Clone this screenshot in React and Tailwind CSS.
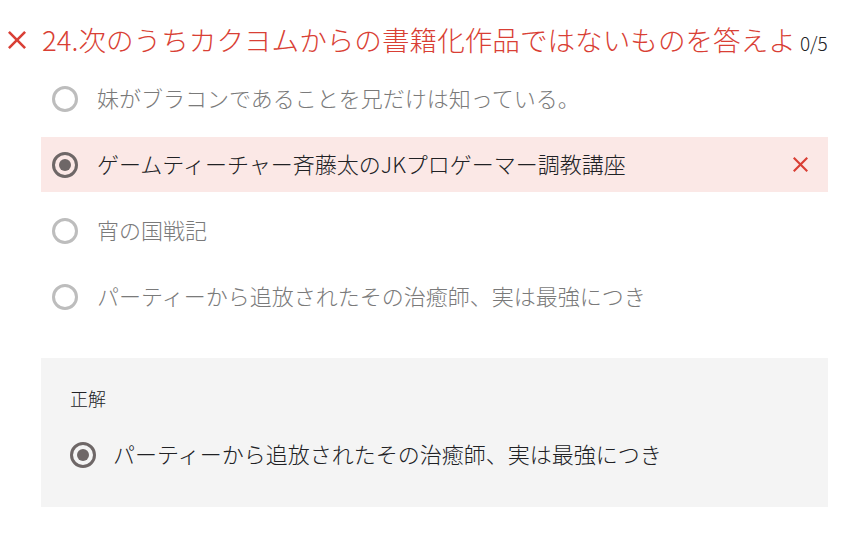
const CloseIcon = ({ className }) => (
  <svg className={className} viewBox="5 5 14 14" fill="currentColor">
    <path d="M19 6.41L17.59 5 12 10.59 6.41 5 5 6.41 10.59 12 5 17.59 6.41 19 12 13.41 17.59 19 19 17.59 13.41 12z" />
  </svg>
);

const Radio = ({ checked }) =>
  checked ? (
    <div className="w-[26px] h-[26px] shrink-0 rounded-full border-[3px] border-[#6e6767] flex items-center justify-center">
      <div className="w-[12px] h-[12px] rounded-full bg-[#6e6767]" />
    </div>
  ) : (
    <div className="w-[26px] h-[26px] shrink-0 rounded-full border-[3px] border-[#bdbdbd]" />
  );

const options = [
  { text: "妹がブラコンであることを兄だけは知っている。" },
  { text: "ゲームティーチャー斉藤太のJKプロゲーマー調教講座", chosen: true },
  { text: "宵の国戦記" },
  { text: "パーティーから追放されたその治癒師、実は最強につき" },
];

export default function App() {
  return (
    <div className="w-[849px] h-[533px] bg-white overflow-hidden font-['Noto_Sans_CJK_JP',sans-serif] font-light">
      {/* question title */}
      <div className="flex items-center h-[52px] mt-[14px] pl-[8px]">
        <CloseIcon className="w-[18px] h-[18px] text-[#d93f35] shrink-0" />
        <div className="flex items-baseline ml-[16px] pb-[2px]">
          <span className="text-[27.6px] leading-[40px] text-[#d93f35] whitespace-nowrap">
            24.次のうちカクヨムからの書籍化作品ではないものを答えよ
          </span>
          <span className="text-[19px] text-[#202124] ml-[4px]">0/5</span>
        </div>
      </div>

      {/* choices */}
      <div className="flex flex-col gap-[11px] pt-[5px] mx-[41px] w-[787px]">
        {options.map((o) => (
          <div
            key={o.text}
            className={`flex items-center h-[55px] pl-[11px] pr-[20px] ${o.chosen ? "bg-[#fbe8e6]" : ""}`}
          >
            <Radio checked={o.chosen} />
            <span
              className={`ml-[19px] pb-[4px] text-[22px] leading-[30px] whitespace-nowrap ${o.chosen ? "text-[#202124]" : "text-[#7a7a7a]"}`}
            >
              {o.text}
            </span>
            {o.chosen && <CloseIcon className="ml-auto w-[15px] h-[15px] text-[#d93f35]" />}
          </div>
        ))}
      </div>

      {/* correct answer */}
      <div className="mt-[34px] mx-[41px] w-[787px] h-[149px] bg-[#f4f4f4] pl-[29px] pt-[28px]">
        <div className="text-[18px] leading-[24px] text-[#202124] pb-[2px]">正解</div>
        <div className="flex items-center mt-[26px]">
          <Radio checked />
          <span className="ml-[17px] pb-[4px] text-[22px] leading-[30px] text-[#202124] whitespace-nowrap">
            パーティーから追放されたその治癒師、実は最強につき
          </span>
        </div>
      </div>
    </div>
  );
}
